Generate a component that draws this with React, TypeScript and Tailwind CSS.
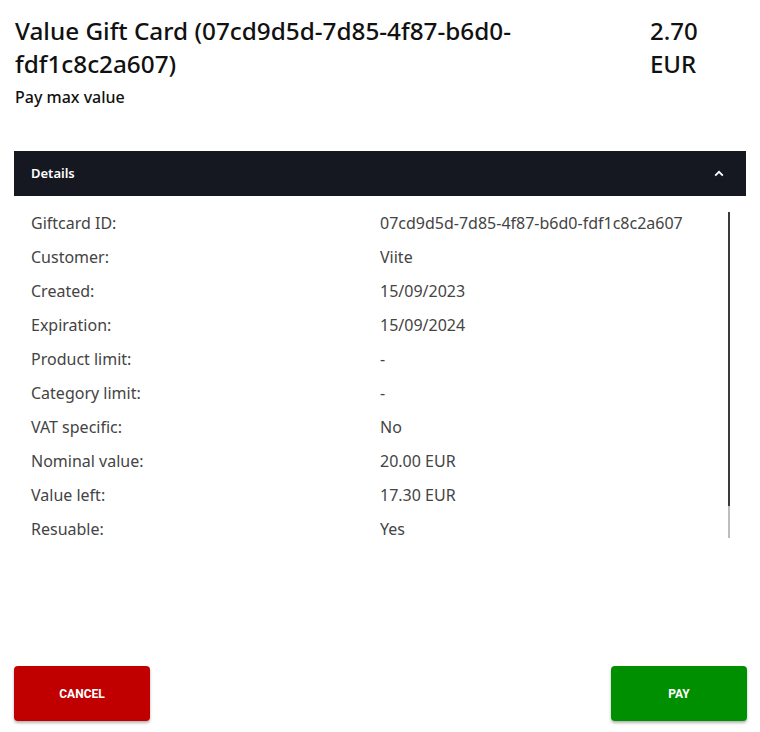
import React from "react";

const rows = [
  { label: "Giftcard ID:", value: "07cd9d5d-7d85-4f87-b6d0-fdf1c8c2a607" },
  { label: "Customer:", value: "Viite" },
  { label: "Created:", value: "15/09/2023" },
  { label: "Expiration:", value: "15/09/2024" },
  { label: "Product limit:", value: "-" },
  { label: "Category limit:", value: "-" },
  { label: "VAT specific:", value: "No" },
  { label: "Nominal value:", value: "20.00 EUR" },
  { label: "Value left:", value: "17.30 EUR" },
  { label: "Resuable:", value: "Yes" },
];

function ChevronUp() {
  return (
    <svg width="10" height="7" viewBox="0 0 10 7" fill="none">
      <path d="M1.2 5.6 L5 1.8 L8.8 5.6" stroke="white" strokeWidth="1.8" />
    </svg>
  );
}

export default function App() {
  return (
    <div className="w-[760px] h-[732px] bg-white flex flex-col font-['Noto_Sans',sans-serif]">
      <div className="flex pl-[15px] pr-[13px] pt-[14px]">
        <div className="flex-1 pr-[20px]">
          <h1 className="text-[24.3px] leading-[33px] font-medium text-[#111]">
            Value Gift Card (07cd9d5d-7d85-4f87-b6d0-fdf1c8c2a607)
          </h1>
        </div>
        <div className="w-[97px] text-[24px] leading-[33px] font-medium text-[#111]">
          2.70 EUR
        </div>
      </div>
      <p className="px-[15px] mt-[6px] text-[16px] leading-[22px] font-medium text-[#111]">
        Pay max value
      </p>

      <div className="mx-[14px] mt-[43px]">
        <div className="h-[45px] bg-[#151820] flex items-center justify-between pl-[17px] pr-[22px]">
          <span className="text-[13px] font-semibold text-white">Details</span>
          <ChevronUp />
        </div>
        <div className="flex pt-[10px]">
          <div className="flex-1">
            {rows.map((row) => (
              <div key={row.label} className="flex h-[34px] items-center text-[16px] text-[#444]">
                <span className="w-[366px] pl-[17px]">{row.label}</span>
                <span>{row.value}</span>
              </div>
            ))}
          </div>
          <div className="w-[2px] mr-[16px] mt-[6px] h-[326px] flex flex-col">
            <div className="h-[294px] bg-[#3a3a3a]" />
            <div className="flex-1 bg-[#bdbdbd]" />
          </div>
        </div>
      </div>

      <div className="mt-auto mb-[11px] mx-[13px] flex justify-between">
        <button className="w-[136px] h-[55px] ml-[1px] rounded-[4px] bg-[#c00000] shadow-[0_2px_3px_rgba(0,0,0,0.3)] text-white text-[12px] font-bold font-['Roboto',sans-serif]">
          CANCEL
        </button>
        <button className="w-[136px] h-[55px] rounded-[4px] bg-[#008f00] shadow-[0_2px_3px_rgba(0,0,0,0.3)] text-white text-[12px] font-bold font-['Roboto',sans-serif]">
          PAY
        </button>
      </div>
    </div>
  );
}
